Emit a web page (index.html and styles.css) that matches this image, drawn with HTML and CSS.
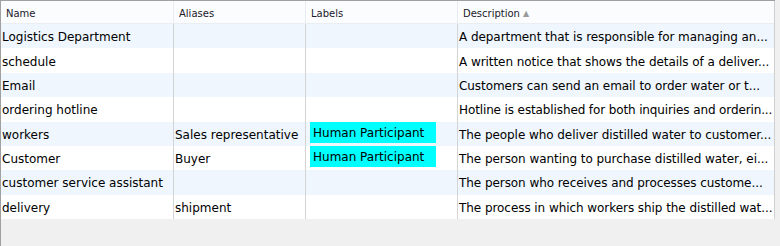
FILE: index.html
```html
<!DOCTYPE html>
<html>
<head>
<meta charset="utf-8">
<link rel="stylesheet" href="styles.css">
</head>
<body>
<div class="frame">
  <div class="grid">
    <div class="row head">
      <div class="cell c1">Name</div>
      <div class="cell c2">Aliases</div>
      <div class="cell c3">Labels</div>
      <div class="cell c4">Description <span class="sort">▲</span></div>
    </div>
    <div class="row alt">
      <div class="cell c1">Logistics Department</div>
      <div class="cell c2"></div>
      <div class="cell c3"></div>
      <div class="cell c4"><span class="clip">A department that is responsible for managing an...</span></div>
    </div>
    <div class="row">
      <div class="cell c1">schedule</div>
      <div class="cell c2"></div>
      <div class="cell c3"></div>
      <div class="cell c4"><span class="clip">A written notice that shows the details of a deliver...</span></div>
    </div>
    <div class="row alt">
      <div class="cell c1">Email</div>
      <div class="cell c2"></div>
      <div class="cell c3"></div>
      <div class="cell c4"><span class="clip">Customers can send an email to order water or t...</span></div>
    </div>
    <div class="row">
      <div class="cell c1">ordering hotline</div>
      <div class="cell c2"></div>
      <div class="cell c3"></div>
      <div class="cell c4"><span class="clip tight">Hotline is established for both inquiries and orderin...</span></div>
    </div>
    <div class="row alt">
      <div class="cell c1">workers</div>
      <div class="cell c2">Sales representative</div>
      <div class="cell c3"><span class="label">Human Participant</span></div>
      <div class="cell c4"><span class="clip">The people who deliver distilled water to customer...</span></div>
    </div>
    <div class="row">
      <div class="cell c1">Customer</div>
      <div class="cell c2">Buyer</div>
      <div class="cell c3"><span class="label">Human Participant</span></div>
      <div class="cell c4"><span class="clip">The person wanting to purchase distilled water, ei...</span></div>
    </div>
    <div class="row alt">
      <div class="cell c1">customer service assistant</div>
      <div class="cell c2"></div>
      <div class="cell c3"></div>
      <div class="cell c4"><span class="clip">The person who receives and processes custome...</span></div>
    </div>
    <div class="row">
      <div class="cell c1">delivery</div>
      <div class="cell c2">shipment</div>
      <div class="cell c3"></div>
      <div class="cell c4"><span class="clip">The process in which workers ship the distilled wat...</span></div>
    </div>
  </div>
</div>
</body>
</html>
```
FILE: styles.css
```css
html, body {
  margin: 0;
  padding: 0;
  background: #f0f0f0;
}
body {
  width: 780px;
  height: 246px;
  overflow: hidden;
  font-family: "DejaVu Sans", Verdana, sans-serif;
}
.frame {
  border-top: 1px solid #a0a0a0;
  border-left: 1px solid #a0a0a0;
  width: 774px;
  height: 245px;
}
.grid {
  display: flex;
  flex-direction: column;
  border-right: 1px solid #d0d0d0;
}
.row {
  display: grid;
  grid-template-columns: 173px 132px 152px 316px;
  height: 24.375px;
  background: #ffffff;
}
.row.alt {
  background: #eff6fd;
}
.cell {
  display: flex;
  align-items: center;
  padding-left: 1px;
  padding-top: 2px;
  font-size: 12px;
  color: #000000;
  white-space: nowrap;
  overflow: hidden;
  border-right: 1px solid #d4d4d4;
  box-sizing: border-box;
}
.cell.c4 {
  border-right: none;
  letter-spacing: -0.06px;
}
.clip.tight {
  letter-spacing: -0.12px;
}
.row.head .cell {
  font-size: 10px;
  color: #1a1a2a;
  padding-left: 5px;
  padding-top: 3px;
  letter-spacing: 0;
  border-right: 1px solid #e8ecf0;
}
.row.head {
  height: 23px;
  background: #fbfcfd;
  border-bottom: 1px solid #eaeef3;
  box-sizing: border-box;
}
.row.head .cell.c4 {
  border-right: none;
}
.sort {
  color: #9a9a9a;
  font-size: 8px;
  margin-left: 3px;
}
.row:not(.head) .cell.c3 {
  align-items: flex-start;
  padding-top: 0;
}
.label {
  background: #00ffff;
  display: inline-flex;
  align-items: center;
  width: 126px;
  height: 21px;
  padding-left: 3px;
  padding-top: 2px;
  margin-left: 3px;
  box-sizing: border-box;
}
```
